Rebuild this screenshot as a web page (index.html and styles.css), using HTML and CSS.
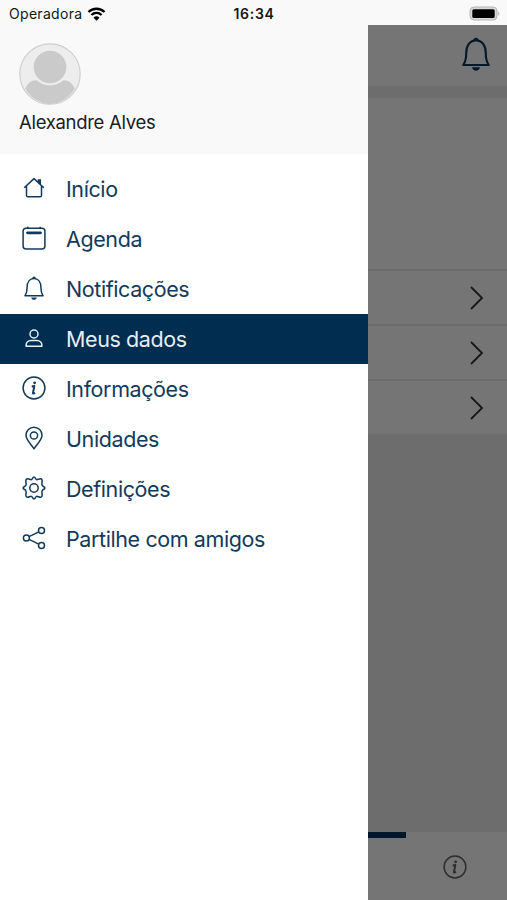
FILE: index.html
```
<!DOCTYPE html>
<html lang="pt">
<head>
  <meta charset="UTF-8">
  <meta name="viewport" content="width=device-width, initial-scale=1.0">
  <title>Meus dados</title>
  <link rel="stylesheet" href="styles.css">
</head>
<body>
  <!-- Shared icons -->
  <svg class="icon-defs" width="0" height="0">
    <symbol id="icon-bell" viewBox="0 0 24 24">
      <path d="M3 19.800c1.700-2.400 2.100-4.400 2.100-8.500C5.100 6 7.800 2.400 12 2.400s6.900 3.600 6.900 8.900c0 4.100.4 6.100 2.100 8.500z"/>
      <path class="solid" d="M10.200 2.400a1.800 1.800 0 0 1 3.600 0zM9.200 21.400h5.600c-.3 1.600-1.400 2.400-2.800 2.400s-2.500-.8-2.800-2.400z"/>
    </symbol>
    <symbol id="icon-info" viewBox="0 0 24 24">
      <circle cx="12" cy="12" r="10.900"/>
      <circle class="solid" cx="12.600" cy="6.800" r="1.400"/>
      <path class="letter" d="M9.700 10.500l2.600-.4-1.300 6.800q-.1 1.300 2-.2"/>
    </symbol>
    <symbol id="icon-chevron" viewBox="0 0 14 24">
      <path d="M1 1l11 11L1 23"/>
    </symbol>
  </svg>

  <div class="status-bar">
    <div class="carrier">
      <span>Operadora</span>
      <svg class="wifi" viewBox="0 0 18 14">
        <path d="M1 5a11.500 11.500 0 0 1 16 0M3.900 8a7.300 7.300 0 0 1 10.200 0"/>
        <path class="solid" d="M9 13.700l-3-3a4.300 4.300 0 0 1 6 0z"/>
      </svg>
    </div>
    <span class="clock">16:34</span>
    <svg class="battery" viewBox="0 0 32 16">
      <rect class="shell" x="1" y="1" width="27" height="13" rx="4"/>
      <rect class="level" x="3.300" y="3.300" width="22.400" height="8.800" rx="1.500"/>
      <path class="cap" d="M29.200 5.200q2.200 2.400 0 4.800z"/>
    </svg>
  </div>

  <div class="app">
    <!-- Side menu -->
    <nav class="drawer">
      <div class="profile">
        <svg class="avatar" viewBox="0 0 62 62">
          <circle class="ring" cx="31" cy="31" r="30.200"/>
          <circle class="shape" cx="31" cy="24" r="16.300"/>
          <path class="shape" d="M6.300 45.500C8.500 40.500 12 37.300 17.500 37.300Q23 42.300 31 42.500 39 42.300 44.500 37.300c5.500 0 9 3.200 11.200 8.200A29.600 29.600 0 0 1 31 61 29.600 29.600 0 0 1 6.300 45.500z"/>
        </svg>
        <div class="name">Alexandre Alves</div>
      </div>

      <ul class="menu">
        <li class="item">
          <svg class="icon" viewBox="0 0 24 24"><path d="M2.200 11.800L12 2.600l9.800 9.200M4.500 10v9.500c0 .8.5 1.300 1.300 1.300h12.400c.8 0 1.300-.5 1.300-1.300V10"/><path class="solid" d="M15.700 3.200h3.300v6.100l-3.300-3z"/></svg>
          <span>Início</span>
        </li>
        <li class="item">
          <svg class="icon" viewBox="0 0 24 24"><rect x="1.100" y="2.200" width="21.800" height="20.700" rx="3"/><path d="M5.800 .8v1.400M18.200 .8v1.400"/><path class="thick" d="M5.500 6.800h13"/></svg>
          <span>Agenda</span>
        </li>
        <li class="item">
          <svg class="icon"><use href="#icon-bell"/></svg>
          <span>Notificações</span>
        </li>
        <li class="item active">
          <svg class="icon" viewBox="0 0 24 24"><circle cx="12" cy="8" r="4"/><path d="M4.100 20.200v-.8c0-3 2.200-5 4.900-5h6c2.700 0 4.900 2 4.900 5v.8z"/></svg>
          <span>Meus dados</span>
        </li>
        <li class="item">
          <svg class="icon"><use href="#icon-info"/></svg>
          <span>Informações</span>
        </li>
        <li class="item">
          <svg class="icon" viewBox="0 0 24 24"><path d="M12 22.800C9.500 18.800 4 13.800 4 9.200a8 8 0 0 1 16 0c0 4.600-5.500 9.600-8 13.600z"/><circle cx="12" cy="9.500" r="3.600"/></svg>
          <span>Unidades</span>
        </li>
        <li class="item">
          <svg class="icon" viewBox="0 0 24 24"><path d="M12 1c1.300 0 1.500 2.300 2.530 2.600 1.200.5 2.600-1.200 4.300-.8 2 .5 1.300 2.900 1.100 4.200-.2 1.200 0 2 .4 2.600.5.900 2.570 1.100 2.570 2.400s-2.070 1.500-2.570 2.400c-.4.600-.6 1.400-.4 2.600.2 1.300.9 3.700-1.100 4.200-1.700.4-3.100-1.300-4.300-.8C13.500 20.700 13.300 23 12 23s-1.500-2.300-2.530-2.600c-1.200-.5-2.600 1.200-4.300.8-2-.5-1.300-2.900-1.100-4.200.2-1.200 0-2-.4-2.600C3.170 13.500 1.100 13.300 1.100 12s2.070-1.500 2.570-2.400c.4-.6.6-1.400.4-2.600-.2-1.300-.9-3.700 1.100-4.200 1.700-.4 3.100 1.300 4.300.8C10.500 3.300 10.700 1 12 1z"/><circle cx="12" cy="12" r="4.200"/></svg>
          <span>Definições</span>
        </li>
        <li class="item">
          <svg class="icon" viewBox="0 0 24 24"><circle cx="4.400" cy="12" r="3"/><circle cx="19.500" cy="4.500" r="3"/><circle cx="19.500" cy="19.500" r="3"/><path d="M7.100 10.700l9.700-4.900M7.100 13.300l9.700 4.900"/></svg>
          <span>Partilhe com amigos</span>
        </li>
      </ul>
    </nav>

    <!-- Dimmed page behind the menu -->
    <main class="page">
      <header class="page-header">
        <svg class="header-bell"><use href="#icon-bell"/></svg>
      </header>
      <section class="panel">
        <div class="summary"></div>
        <div class="row"><svg class="chevron"><use href="#icon-chevron"/></svg></div>
        <div class="row"><svg class="chevron"><use href="#icon-chevron"/></svg></div>
        <div class="row"><svg class="chevron"><use href="#icon-chevron"/></svg></div>
      </section>
      <footer class="tab-bar">
        <div class="indicator"></div>
        <div class="tab"><svg class="icon"><use href="#icon-info"/></svg></div>
      </footer>
    </main>
  </div>
</body>
</html>
```

FILE: styles.css
```
* {
  box-sizing: border-box;
}

body {
  margin: 0;
  height: 900px;
  display: flex;
  flex-direction: column;
  overflow: hidden;
  font-family: Inter, "Liberation Sans", sans-serif;
  background: #fff;
}

svg {
  display: block;
  flex: none;
  fill: none;
  stroke: currentColor;
  stroke-width: 1.5;
  stroke-linejoin: round;
}

.icon-defs {
  position: absolute;
}

.solid {
  fill: currentColor;
  stroke: none;
}

.thick {
  stroke-width: 2.8;
  stroke-linecap: round;
}

.letter {
  stroke-width: 2;
}

/* Status bar */
.status-bar {
  height: 25px;
  flex: none;
  display: grid;
  grid-template-columns: 1fr auto 1fr;
  align-items: center;
  padding: 2px 8px 0 9px;
  background: #f9f9f9;
  color: #161616;
  font-size: 14px;
}

.carrier {
  display: flex;
  align-items: center;
  gap: 5px;
  letter-spacing: 0.3px;
}

.wifi {
  width: 19px;
  height: 14px;
  color: #000;
  stroke-width: 2.3;
}

.clock {
  font-weight: 600;
  letter-spacing: 0.7px;
}

.battery {
  width: 32px;
  height: 16px;
  justify-self: end;
  margin-right: -2px;
  stroke: none;
}

.shell {
  fill: #d9d9d9;
  stroke: #b5b5b5;
  stroke-width: 1;
}

.level {
  fill: #000;
}

.cap {
  fill: #b0b0b0;
}

.app {
  flex: 1;
  display: flex;
}

/* Drawer */
.drawer {
  width: 368px;
  flex: none;
  background: #fff;
}

.profile {
  height: 129px;
  padding: 18px 19px 0;
  background: #f9f9f9;
}

.avatar {
  width: 62px;
  height: 62px;
}

.ring {
  fill: #ededed;
  stroke: #cfcfcf;
  stroke-width: 1.2;
}

.shape {
  fill: #cacaca;
  stroke: none;
}

.name {
  margin-top: 5px;
  color: #1c1c1c;
  font-size: 18.5px;
  line-height: 24px;
  letter-spacing: -0.3px;
  white-space: nowrap;
}

.menu {
  list-style: none;
  margin: 0;
  padding: 10px 0 0;
}

.item {
  height: 50px;
  display: flex;
  align-items: center;
  gap: 20px;
  padding: 0 0 2px 22px;
  color: #123a5c;
  font-size: 21.5px;
  letter-spacing: -0.4px;
  white-space: nowrap;
}

.item span {
  padding-top: 2px;
}

.item.active {
  background: #002d50;
  color: #e6edf3;
}

.icon {
  width: 24px;
  height: 24px;
}

/* Dimmed page */
.page {
  flex: 1;
  display: flex;
  flex-direction: column;
  background: #6d6d6d;
}

.page-header {
  height: 61px;
  display: flex;
  justify-content: flex-end;
  padding: 11px 14px 0 0;
  background: #757575;
  color: #06192a;
}

.header-bell {
  width: 34px;
  height: 36px;
}

.panel {
  margin-top: 12px;
  background: #757575;
}

.summary {
  height: 171px;
}

.row {
  height: 55px;
  display: flex;
  align-items: center;
  justify-content: flex-end;
  padding-right: 23px;
  border-top: 2px solid #6b6b6b;
  color: #171717;
}

.chevron {
  width: 14px;
  height: 24px;
  stroke-width: 1.8;
  stroke-linejoin: miter;
}

.tab-bar {
  height: 68px;
  margin-top: auto;
  background: #757575;
}

.indicator {
  width: 38px;
  height: 6px;
  background: #001629;
}

.tab {
  display: flex;
  justify-content: flex-end;
  padding: 17px 40px 0 0;
  color: #2e2e2e;
}
```
